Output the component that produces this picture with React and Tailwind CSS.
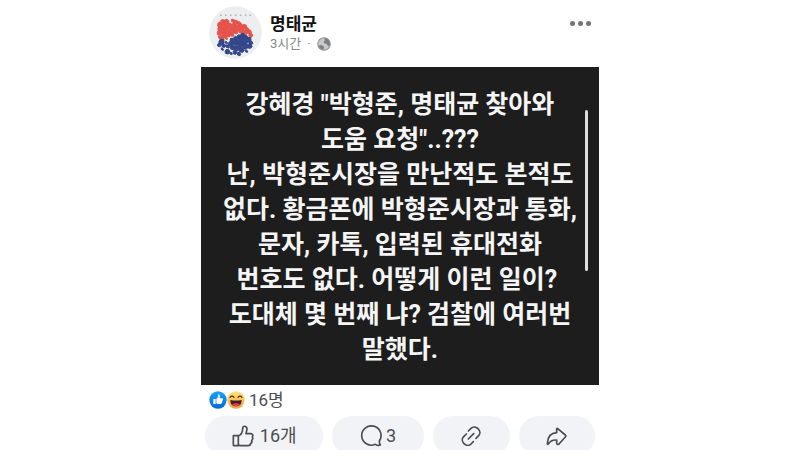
const redPetals = [
  [57, 73, 7], [66, 65, 8], [78, 63, 7], [97, 61, 5], [105, 66, 7], [116, 69, 6],
  [121, 77, 6], [132, 79, 7], [140, 87, 6], [147, 95, 6], [151, 105, 6], [58, 86, 7],
  [70, 78, 8], [84, 75, 8], [97, 78, 9], [109, 83, 8], [122, 90, 8], [134, 97, 7],
  [56, 98, 7], [68, 92, 8], [81, 90, 8], [94, 94, 8], [106, 95, 6], [59, 110, 6],
  [71, 105, 8], [84, 103, 7], [95, 104, 5], [66, 115, 4], [77, 114, 4],
];
const bluePetals = [
  [126, 105, 6], [116, 109, 6], [134, 112, 8], [145, 118, 7], [151, 128, 6], [106, 115, 7],
  [120, 119, 8], [134, 125, 8], [148, 138, 7], [94, 120, 6], [106, 128, 8], [120, 133, 9],
  [135, 139, 8], [90, 131, 7], [77, 127, 4], [62, 125, 8], [55, 135, 5], [69, 136, 6],
  [81, 139, 5], [96, 142, 7], [109, 145, 8], [123, 149, 8], [138, 153, 4], [65, 147, 4],
  [80, 155, 7], [91, 160, 4], [103, 157, 6], [115, 162, 5],
];

function petal([x, y, r], i) {
  const k = (i % 3) - 1;
  return [
    [x - r, y - 2 - k], [x - 3 + k, y - r], [x + r - 2, y - r + 2 + k],
    [x + r, y + 2], [x + 2 - k, y + r], [x - r + 1, y + r - 2],
  ].map((p) => p.join(",")).join(" ");
}

function Avatar() {
  return (
    <svg viewBox="24 16 161 161" className="size-[53px] shrink-0" role="img" aria-label="명태균">
      <circle cx="104.500" cy="96.500" r="80" fill="#edeeef" />
      {[60, 75, 90, 105, 120, 135, 149].map((x) => (
        <circle key={x} cx={x} cy="44" r="2.800" fill="#b4b5bb" />
      ))}
      <g fill="#e8554a" stroke="#e0504a" strokeWidth="3">
        {redPetals.map((p, i) => <polygon key={i} points={petal(p, i)} />)}
      </g>
      <g fill="#36488c" stroke="#324385" strokeWidth="3">
        {bluePetals.map((p, i) => <polygon key={i} points={petal(p, i)} />)}
      </g>
    </svg>
  );
}

function Globe() {
  return (
    <svg viewBox="0 0 40 40" className="size-[14px]" role="img" aria-label="전체 공개">
      <circle cx="20" cy="20" r="18" fill="#c9cacc" stroke="#909295" strokeWidth="3" />
      <path d="M20 3C31 3 38 11 37 22L32 27 28 20 21 18 19 12 23 9ZM5 24L13 23 20 28 19 36C11 35 6 31 5 24Z" fill="#7d7f82" />
    </svg>
  );
}

function LikeBadge() {
  return (
    <svg viewBox="0 0 54 54" className="size-[18px]" aria-hidden="true">
      <defs>
        <linearGradient id="like" x2="0" y2="1">
          <stop stopColor="#18a4f5" />
          <stop offset="1" stopColor="#0866dc" />
        </linearGradient>
      </defs>
      <circle cx="27" cy="27" r="26" fill="url(#like)" />
      <path d="M13 24H20V39H13ZM22 24L27 18V12C28 9 33 11 33 16L32 22H39C43 22 43 26 40 28C42 30 41 32 39 33C40 35 38 38 34 39H26L22 37Z" fill="white" />
    </svg>
  );
}

function HahaBadge() {
  return (
    <svg viewBox="0 0 54 54" className="size-[18px]" aria-hidden="true">
      <defs>
        <linearGradient id="haha" x2="0" y2="1">
          <stop stopColor="#ffe36f" />
          <stop offset="1" stopColor="#f3a64b" />
        </linearGradient>
      </defs>
      <circle cx="27" cy="27" r="26" fill="url(#haha)" />
      <path d="M9 19Q15 12 21 19M45 19Q39 12 33 19" fill="none" stroke="#43301f" strokeWidth="3.500" strokeLinecap="round" strokeLinejoin="round" />
      <path d="M10 27Q27 30 44 27C44 40 38 46 27 46S10 40 10 27Z" fill="#47201c" />
      <path d="M15 40Q27 33 39 40Q34 46 27 46T15 40Z" fill="#ec3d52" />
    </svg>
  );
}

function LineIcon({ className, viewBox, children }) {
  return (
    <svg className={className} viewBox={viewBox} fill="none" stroke="#4b4d51" strokeWidth="5" strokeLinecap="round" strokeLinejoin="round" aria-hidden="true">
      {children}
    </svg>
  );
}

const pill = "flex h-10 items-center justify-center rounded-full bg-[#f2f3f7] text-lg text-[#4b4d51]";

const lines = [
  "강혜경 \"박형준, 명태균 찾아와",
  "도움 요청\"..???",
  "난, 박형준시장을 만난적도 본적도",
  "없다. 황금폰에 박형준시장과 통화,",
  "문자, 카톡, 입력된 휴대전화",
  "번호도 없다. 어떻게 이런 일이? ",
  "도대체 몇 번째 냐? 검찰에 여러번",
  "말했다.",
];

export default function App() {
  return (
    <main className="h-screen overflow-hidden bg-white font-['Roboto','Noto_Sans_CJK_KR',sans-serif]">
      <article className="mx-auto w-full max-w-[398px]">
        <header className="flex items-start gap-2 px-2 pt-1.5 pb-2">
          <Avatar />
          <div className="flex-1 pt-1.5">
            <h1 className="text-[17px] leading-6 font-bold text-[#111214]">명태균</h1>
            <p className="flex items-center gap-1.5 text-[13px] leading-4 text-[#85878a]">
              <span>3시간</span>
              <span>·</span>
              <Globe />
            </p>
          </div>
          <button type="button" aria-label="더 보기" className="flex gap-[3px] pt-[15px]">
            <i className="size-[5px] rounded-full bg-[#737477]" />
            <i className="size-[5px] rounded-full bg-[#737477]" />
            <i className="size-[5px] rounded-full bg-[#737477]" />
          </button>
        </header>

        <section className="relative bg-[#1d1d1d] px-4 pt-5 pb-[18px]">
          <p className="text-center text-[25px] leading-[35px] font-bold text-[#f5f5f5]">
            {lines.map((line) => (
              <span key={line} className="block whitespace-pre">{line}</span>
            ))}
          </p>
          <div className="absolute top-[43px] right-[11px] h-[161px] w-[3px] rounded-full bg-[#dedede]" />
        </section>

        <div className="flex items-center px-2 pt-[3px] pb-1">
          <LikeBadge />
          <HahaBadge />
          <span className="pl-1 text-[17px] leading-6 text-[#4b4d51]">16명</span>
        </div>

        <div className="flex gap-[9px] px-1">
          <button type="button" aria-label="좋아요 16개" className={`${pill} flex-[118] gap-1.5`}>
            <LineIcon className="size-[22px]" viewBox="19 13 66 66">
              <path d="M23 45H38V75H25Q23 75 23 73ZM38 46C47 42 51 35 51 24C51 13 64 15 64 26L61 39H75C81 39 83 44 80 49C82 53 81 57 78 59C80 64 78 67 75 68C75 73 72 75 67 75H45L38 73" />
            </LineIcon>
            <span>16개</span>
          </button>
          <button type="button" aria-label="댓글 3개" className={`${pill} flex-[91] gap-1`}>
            <LineIcon className="size-[22px]" viewBox="0 0 66 66">
              <path d="M58 48A29 29 0 1 0 46 58Q53 63 61 60Q58 56 58 48Z" />
            </LineIcon>
            <span>3</span>
          </button>
          <button type="button" aria-label="링크 복사" className={`${pill} flex-[77]`}>
            <LineIcon className="size-5" viewBox="60 18 60 60">
              <path d="M82 33L90 25C96 19 105 20 111 26C117 32 119 41 113 47L105 55M76 42L68 50C62 56 63 65 69 71C75 77 84 78 90 72L97 65M82 57L98 41" />
            </LineIcon>
          </button>
          <button type="button" aria-label="공유" className={`${pill} flex-[76]`}>
            <LineIcon className="size-[21px]" viewBox="31 18 63 63">
              <path d="M63 28Q63 24 66 26L89 45Q92 48 89 51L70 72Q65 76 63 70V60C50 59 44 62 38 72Q35 75 35 70C36 51 45 39 63 38Z" />
            </LineIcon>
          </button>
        </div>
      </article>
    </main>
  );
}
